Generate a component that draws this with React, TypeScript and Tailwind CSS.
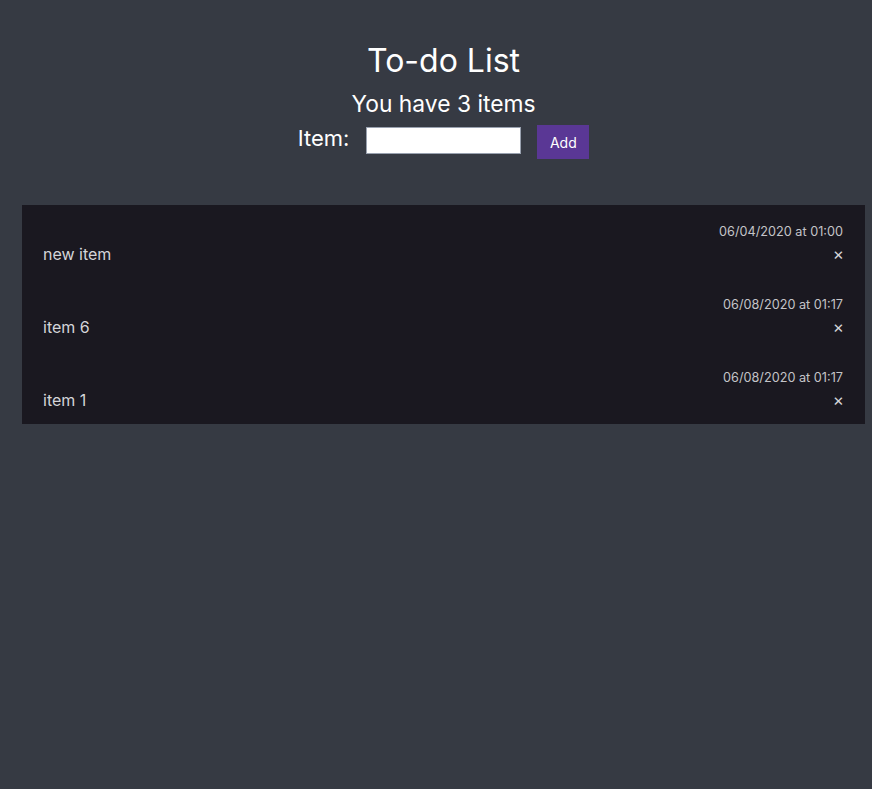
import { useState } from 'react';

interface Todo {
  id: number;
  text: string;
  createdAt: string;
}

const initialTodos: Todo[] = [
  { id: 1, text: 'new item', createdAt: '06/04/2020 at 01:00' },
  { id: 2, text: 'item 6', createdAt: '06/08/2020 at 01:17' },
  { id: 3, text: 'item 1', createdAt: '06/08/2020 at 01:17' },
];

export default function App() {
  const [todos, setTodos] = useState<Todo[]>(initialTodos);
  const [value, setValue] = useState('');

  const addTodo = () => {
    if (!value.trim()) return;
    setTodos(prev => [{ id: Date.now(), text: value, createdAt: '06/08/2020 at 01:17' }, ...prev]);
    setValue('');
  };

  return (
    <div className="min-h-screen bg-[#363a43] font-['Inter',sans-serif] pl-[22px] pr-[7px]">
      <div className="flex flex-col items-center pt-[41px] text-white">
        <h1 className="text-[32px] leading-[40px]">To-do List</h1>
        <h2 className="text-[22.8px] leading-[28px] mt-[9px]">You have {todos.length} items</h2>
        <div className="flex items-start mt-[7px]">
          <label className="text-[22px] leading-[28px] mr-[17px] -mt-[1px]">Item:</label>
          <input
            value={value}
            onChange={e => setValue(e.target.value)}
            className="mt-[2px] w-[155px] h-[27px] bg-white border border-gray-400 text-black text-sm px-1 outline-none"
          />
          <button
            onClick={addTodo}
            className="ml-[16px] w-[52px] h-[34px] bg-[#5a3795] text-[14px] text-white"
          >
            Add
          </button>
        </div>
      </div>

      <ul className="mt-[46px] bg-[#1a1820]">
        {todos.map(todo => (
          <li key={todo.id} className="flex justify-between items-end pt-[18px] pb-[15px] pl-[21px] pr-[22px]">
            <span className="text-[16px] leading-[20px] text-[#d4d4d8] -mb-[1px]">{todo.text}</span>
            <div className="flex flex-col items-end">
              <span className="text-[12.7px] leading-[18px] text-[#c4c4c8]">{todo.createdAt}</span>
              <button
                onClick={() => setTodos(prev => prev.filter(t => t.id !== todo.id))}
                className="mt-[4px] text-[17px] leading-[18px] text-[#d4d4d8] -mr-[1px]"
              >
                ×
              </button>
            </div>
          </li>
        ))}
      </ul>
    </div>
  );
}
